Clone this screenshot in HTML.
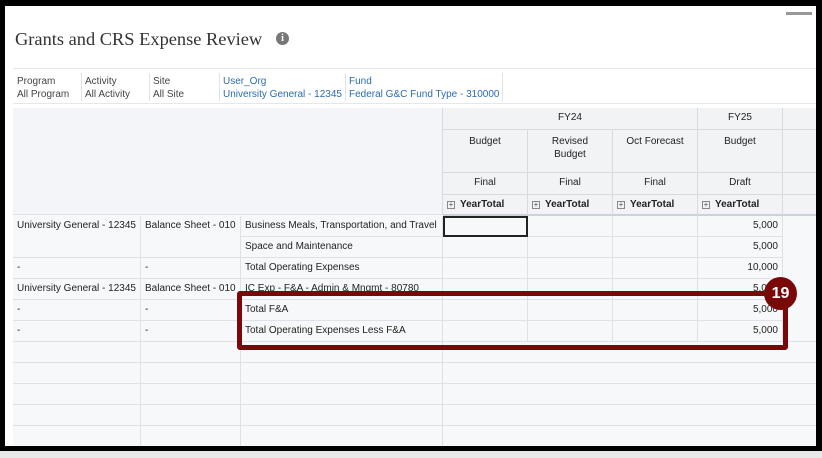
<!DOCTYPE html>
<html><head><meta charset="utf-8"><style>
*{margin:0;padding:0;box-sizing:border-box}
body{width:822px;height:458px;background:#e8e8e8;position:relative;overflow:hidden;font-family:"Liberation Sans",Arial,sans-serif}
.frame{position:absolute;left:0;top:0;width:822px;height:451px;background:#000}
.in{position:absolute;left:5px;top:6px;width:811px;height:440px;background:#fff;overflow:hidden}
.title{position:absolute;left:10px;top:23px;font-family:"Liberation Serif",serif;font-size:18.4px;color:#333}
.info{position:absolute;left:271px;top:26px;width:13px;height:13px;border-radius:50%;background:#777;color:#fff;font-size:10px;font-weight:bold;text-align:center;line-height:13px;font-family:"Liberation Serif",serif}
.bar{position:absolute;left:781px;top:6px;width:26px;height:3px;background:#999}
.filters{position:absolute;left:8px;top:62px;width:803px;height:36px;border-top:1px solid #e4e8ec;border-bottom:1px solid #e4e8ec}
.f{position:absolute;top:6px;font-size:10px;line-height:13px;color:#444;padding-left:4px}
.f.b{color:#2b6cb0}
.sep{position:absolute;top:4px;width:1px;height:28px;background:#dde3ea}
.cell{position:absolute;font-size:10px;color:#222;border-right:1px solid #dde2e8;border-bottom:1px solid #dde2e8;line-height:20px;padding:0 4px;white-space:nowrap;overflow:hidden}
.h{background:#f2f3f5;text-align:center;border-color:#d6dbe0}
.r{text-align:right;padding-right:4px}
.yt{font-weight:bold;text-align:left;padding-left:4px}
.pl{display:inline-block;width:8px;height:8px;border:1px solid #888;font-size:8px;line-height:6px;text-align:center;margin-right:5px;vertical-align:0;color:#555;font-weight:normal}
.box{position:absolute;left:237px;top:291px;width:551px;height:59px;border:5px solid #7a0808;border-radius:3px}
.badge{position:absolute;left:764px;top:277px;width:33px;height:33px;border-radius:50%;background:#7a0808;color:#fff;font-weight:bold;font-size:16px;text-align:center;line-height:33px}
</style></head><body>
<div class="frame"></div>
<div class="in">
<div class="title">Grants and CRS Expense Review</div>
<div class="info">i</div>
<div class="bar"></div>
<div class="filters">
<div class="f" style="left:0">Program<br>All Program</div>
<div class="sep" style="left:68px"></div>
<div class="f" style="left:68px">Activity<br>All Activity</div>
<div class="sep" style="left:136px"></div>
<div class="f" style="left:136px">Site<br>All Site</div>
<div class="sep" style="left:206px"></div>
<div class="f b" style="left:206px">User_Org<br>University General - 12345</div>
<div class="sep" style="left:332px"></div>
<div class="f b" style="left:332px">Fund<br>Federal G&amp;C Fund Type - 310000</div>
<div class="sep" style="left:489px"></div>
</div>
</div>
<div style="position:absolute;left:13px;top:108px;width:803px;height:338px;background:#f7f8fa;overflow:hidden">
<div class="cell" style="left:0;top:0;width:430px;height:107px;background:#f4f5f8;border-right:1px solid #d6dbe0"></div>
<div class="cell h" style="left:430px;top:0;width:255px;height:22px">FY24</div>
<div class="cell h" style="left:685px;top:0;width:85px;height:22px">FY25</div>
<div class="cell h" style="left:770px;top:0;width:40px;height:22px"></div>
<div class="cell h" style="left:430px;top:22px;width:85px;height:43px;line-height:13px;padding-top:5px">Budget</div>
<div class="cell h" style="left:515px;top:22px;width:85px;height:43px;line-height:13px;padding-top:5px">Revised<br>Budget</div>
<div class="cell h" style="left:600px;top:22px;width:85px;height:43px;line-height:13px;padding-top:5px">Oct Forecast</div>
<div class="cell h" style="left:685px;top:22px;width:85px;height:43px;line-height:13px;padding-top:5px">Budget</div>
<div class="cell h" style="left:770px;top:22px;width:40px;height:43px"></div>
<div class="cell h" style="left:430px;top:65px;width:85px;height:22px">Final</div>
<div class="cell h" style="left:515px;top:65px;width:85px;height:22px">Final</div>
<div class="cell h" style="left:600px;top:65px;width:85px;height:22px">Final</div>
<div class="cell h" style="left:685px;top:65px;width:85px;height:22px">Draft</div>
<div class="cell h" style="left:770px;top:65px;width:40px;height:22px"></div>
<div class="cell h yt" style="left:430px;top:87px;width:85px;height:21px;border-bottom:2px solid #ccd2d8"><span class="pl">+</span>YearTotal</div>
<div class="cell h yt" style="left:515px;top:87px;width:85px;height:21px;border-bottom:2px solid #ccd2d8"><span class="pl">+</span>YearTotal</div>
<div class="cell h yt" style="left:600px;top:87px;width:85px;height:21px;border-bottom:2px solid #ccd2d8"><span class="pl">+</span>YearTotal</div>
<div class="cell h yt" style="left:685px;top:87px;width:85px;height:21px;border-bottom:2px solid #ccd2d8"><span class="pl">+</span>YearTotal</div>
<div class="cell h" style="left:770px;top:87px;width:40px;height:21px;border-bottom:2px solid #ccd2d8"></div>
</div>
<div style="position:absolute;left:13px;top:216px;width:803px;height:230px;overflow:hidden;background:#f7f8fa">
<div class="cell" style="left:0;top:0;width:128px;height:42px">University General - 12345</div>
<div class="cell" style="left:128px;top:0;width:100px;height:42px">Balance Sheet - 010</div>
<div class="cell" style="left:228px;top:0;width:202px;height:21px">Business Meals, Transportation, and Travel</div>
<div class="cell" style="left:228px;top:21px;width:202px;height:21px">Space and Maintenance</div>
<div class="cell" style="left:0;top:42px;width:128px;height:21px">-</div>
<div class="cell" style="left:128px;top:42px;width:100px;height:21px">-</div>
<div class="cell" style="left:228px;top:42px;width:202px;height:21px">Total Operating Expenses</div>
<div class="cell" style="left:0;top:63px;width:128px;height:21px">University General - 12345</div>
<div class="cell" style="left:128px;top:63px;width:100px;height:21px">Balance Sheet - 010</div>
<div class="cell" style="left:228px;top:63px;width:202px;height:21px">IC Exp - F&amp;A - Admin &amp; Mngmt - 80780</div>
<div class="cell" style="left:0;top:84px;width:128px;height:21px">-</div>
<div class="cell" style="left:128px;top:84px;width:100px;height:21px">-</div>
<div class="cell" style="left:228px;top:84px;width:202px;height:21px">Total F&amp;A</div>
<div class="cell" style="left:0;top:105px;width:128px;height:21px">-</div>
<div class="cell" style="left:128px;top:105px;width:100px;height:21px">-</div>
<div class="cell" style="left:228px;top:105px;width:202px;height:21px">Total Operating Expenses Less F&amp;A</div>
<div class="cell" style="left:430px;top:0;width:85px;height:21px;border:2px solid #222"></div>
<div class="cell" style="left:515px;top:0;width:85px;height:21px"></div><div class="cell" style="left:600px;top:0;width:85px;height:21px"></div>
<div class="cell r" style="left:685px;top:0;width:85px;height:21px">5,000</div>
<div class="cell" style="left:430px;top:21px;width:85px;height:21px"></div><div class="cell" style="left:515px;top:21px;width:85px;height:21px"></div><div class="cell" style="left:600px;top:21px;width:85px;height:21px"></div>
<div class="cell r" style="left:685px;top:21px;width:85px;height:21px">5,000</div>
<div class="cell" style="left:430px;top:42px;width:85px;height:21px"></div><div class="cell" style="left:515px;top:42px;width:85px;height:21px"></div><div class="cell" style="left:600px;top:42px;width:85px;height:21px"></div>
<div class="cell r" style="left:685px;top:42px;width:85px;height:21px">10,000</div>
<div class="cell" style="left:430px;top:63px;width:85px;height:21px"></div><div class="cell" style="left:515px;top:63px;width:85px;height:21px"></div><div class="cell" style="left:600px;top:63px;width:85px;height:21px"></div>
<div class="cell r" style="left:685px;top:63px;width:85px;height:21px">5,000</div>
<div class="cell" style="left:430px;top:84px;width:85px;height:21px"></div><div class="cell" style="left:515px;top:84px;width:85px;height:21px"></div><div class="cell" style="left:600px;top:84px;width:85px;height:21px"></div>
<div class="cell r" style="left:685px;top:84px;width:85px;height:21px">5,000</div>
<div class="cell" style="left:430px;top:105px;width:85px;height:21px"></div><div class="cell" style="left:515px;top:105px;width:85px;height:21px"></div><div class="cell" style="left:600px;top:105px;width:85px;height:21px"></div>
<div class="cell r" style="left:685px;top:105px;width:85px;height:21px">5,000</div>
<div class="cell" style="left:770px;top:0;width:40px;height:126px"></div>
<div class="cell" style="left:0;top:126px;width:128px;height:21px"></div><div class="cell" style="left:128px;top:126px;width:100px;height:21px"></div><div class="cell" style="left:228px;top:126px;width:202px;height:21px"></div><div class="cell" style="left:430px;top:126px;width:380px;height:21px"></div>
<div class="cell" style="left:0;top:147px;width:128px;height:21px"></div><div class="cell" style="left:128px;top:147px;width:100px;height:21px"></div><div class="cell" style="left:228px;top:147px;width:202px;height:21px"></div><div class="cell" style="left:430px;top:147px;width:380px;height:21px"></div>
<div class="cell" style="left:0;top:168px;width:128px;height:21px"></div><div class="cell" style="left:128px;top:168px;width:100px;height:21px"></div><div class="cell" style="left:228px;top:168px;width:202px;height:21px"></div><div class="cell" style="left:430px;top:168px;width:380px;height:21px"></div>
<div class="cell" style="left:0;top:189px;width:128px;height:21px"></div><div class="cell" style="left:128px;top:189px;width:100px;height:21px"></div><div class="cell" style="left:228px;top:189px;width:202px;height:21px"></div><div class="cell" style="left:430px;top:189px;width:380px;height:21px"></div>
<div class="cell" style="left:0;top:210px;width:128px;height:21px"></div><div class="cell" style="left:128px;top:210px;width:100px;height:21px"></div><div class="cell" style="left:228px;top:210px;width:202px;height:21px"></div><div class="cell" style="left:430px;top:210px;width:380px;height:21px"></div>
</div>
<div class="box"></div>
<div class="badge">19</div>
</body></html>
